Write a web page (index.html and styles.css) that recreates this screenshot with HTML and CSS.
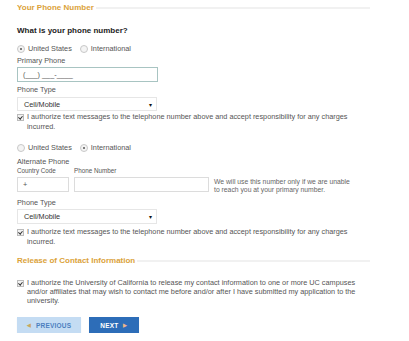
FILE: index.html
```html
<!DOCTYPE html>
<html lang="en">
<head>
<meta charset="utf-8">
<title>Your Phone Number</title>
<link rel="stylesheet" href="styles.css">
</head>
<body>
<div class="page">
  <div class="legend legend-first"><span>Your Phone Number</span></div>

  <div class="question">What is your phone number?</div>

  <div class="radios r1">
    <label class="opt"><span class="radio checked"></span>United States</label>
    <label class="opt"><span class="radio"></span>International</label>
  </div>
  <div class="label l-primary">Primary Phone</div>
  <div class="input focus wide">(___) ___-____</div>

  <div class="label l-type1">Phone Type</div>
  <div class="select s1"><span>Cell/Mobile</span><span class="caret">&#9662;</span></div>

  <div class="check c1"><span class="box"></span><span class="ctext">I authorize text messages to the telephone number above and accept responsibility for any charges incurred.</span></div>

  <div class="radios r2">
    <label class="opt"><span class="radio"></span>United States</label>
    <label class="opt"><span class="radio checked"></span>International</label>
  </div>
  <div class="label l-alt">Alternate Phone</div>
  <div class="alt-row">
    <div class="col">
      <div class="small">Country Code</div>
      <div class="input cc">+</div>
    </div>
    <div class="col">
      <div class="small">Phone Number</div>
      <div class="input pn"></div>
    </div>
    <div class="helper">We will use this number only if we are unable<br>to reach you at your primary number.</div>
  </div>

  <div class="label l-type2">Phone Type</div>
  <div class="select s2"><span>Cell/Mobile</span><span class="caret">&#9662;</span></div>

  <div class="check c2"><span class="box"></span><span class="ctext">I authorize text messages to the telephone number above and accept responsibility for any charges incurred.</span></div>

  <div class="legend legend-second"><span>Release of Contact Information</span></div>

  <div class="check c3"><span class="box"></span><span class="ctext">I authorize the University of California to release my contact information to one or more UC campuses and/or affiliates that may wish to contact me before and/or after I have submitted my application to the university.</span></div>

  <div class="buttons">
    <div class="btn prev"><span class="arr">&#9664;</span>PREVIOUS</div>
    <div class="btn next">NEXT<span class="arr">&#9654;</span></div>
  </div>
</div>
</body>
</html>
```

FILE: styles.css
```css
html, body {
  margin: 0;
  padding: 0;
  background: #ffffff;
}
body {
  font-family: "Liberation Sans", Arial, sans-serif;
  font-size: 7.3px;
  color: #444444;
}
.page {
  padding: 3px 39px 0 17px;
}
.legend {
  display: flex;
  align-items: center;
  gap: 2px;
  height: 10px;
  line-height: 10px;
  font-size: 8px;
  font-weight: bold;
  color: #dba23a;
}
.legend::after {
  content: "";
  flex: 1;
  border-top: 2px solid #f1f1f1;
}
.question {
  margin-top: 13px;
  font-weight: bold;
  font-size: 8px;
  line-height: 10px;
  color: #222;
}
.radios {
  display: flex;
  gap: 8px;
  line-height: 10px;
  color: #555;
}
.r1 { margin-top: 8px; }
.r2 { margin-top: 11px; }
.opt {
  display: flex;
  align-items: center;
  gap: 3px;
}
.radio {
  width: 6px;
  height: 6px;
  border-radius: 50%;
  border: 1px solid #c8c8c8;
  background: #f4f4f4;
  position: relative;
}
.radio.checked::after {
  content: "";
  position: absolute;
  left: 2px;
  top: 2px;
  width: 2px;
  height: 2px;
  border-radius: 50%;
  background: #555;
}
.label {
  line-height: 10px;
  color: #555;
}
.l-primary { margin-top: 2px; }
.l-type1 { margin-top: 3px; }
.l-alt { margin-top: 4px; }
.l-type2 { margin-top: 6px; }
.input {
  box-sizing: border-box;
  height: 15px;
  border: 1px solid #dcdcdc;
  background: #fff;
  padding: 0 5px;
  line-height: 13px;
  color: #555;
}
.input.focus {
  border-color: #a8c4c2;
  margin-top: 1px;
}
.wide { width: 141px; }
.select {
  box-sizing: border-box;
  width: 140px;
  height: 15px;
  border: 1px solid #e6e6e6;
  display: flex;
  align-items: center;
  justify-content: space-between;
  padding: 0 4px 0 6px;
  color: #333;
}
.s1 { margin-top: 2px; height: 14px; }
.s2 { margin-top: 1px; }
.caret {
  font-size: 6px;
  color: #111;
}
.check {
  display: flex;
  align-items: flex-start;
  gap: 3px;
  line-height: 10px;
  color: #555;
  padding-right: 6px;
}
.c1 { margin-top: 1px; }
.c2 { margin-top: 3px; }
.c3 { margin-top: 12px; line-height: 9px; }
.box {
  flex: none;
  width: 5px;
  height: 5px;
  margin-top: 2px;
  border: 1px solid #bbb;
  background: #f2f2f2;
  position: relative;
}
.box::after {
  content: "";
  position: absolute;
  left: 1px;
  top: 0;
  width: 1.5px;
  height: 3px;
  border-right: 1px solid #333;
  border-bottom: 1px solid #333;
  transform: rotate(40deg);
}
.ctext { flex: 1; }
.alt-row {
  display: flex;
  align-items: flex-end;
  gap: 5px;
}
.col {
  display: flex;
  flex-direction: column;
}
.small {
  font-size: 6.3px;
  line-height: 8px;
  margin-bottom: 2px;
  color: #555;
}
.cc { width: 52px; }
.pn { width: 135px; }
.helper {
  font-size: 6.8px;
  line-height: 8px;
  color: #666;
  margin-bottom: -2px;
}
.legend-second { margin-top: 9px; }
.buttons {
  display: flex;
  gap: 8px;
  margin-top: 12px;
}
.btn {
  height: 16px;
  display: flex;
  align-items: center;
  justify-content: center;
  gap: 5px;
  font-size: 6.5px;
  font-weight: bold;
  letter-spacing: 0.2px;
  box-shadow: 0 1px 1px rgba(0,0,0,0.08);
}
.prev {
  width: 64px;
  background: #c4dcf3;
  color: #4c7fbf;
}
.prev .arr { color: #c8a860; font-size: 5px; }
.next {
  width: 50px;
  background: #2d6db8;
  color: #fff;
}
.next .arr { color: #f0b58a; font-size: 5px; }
```
